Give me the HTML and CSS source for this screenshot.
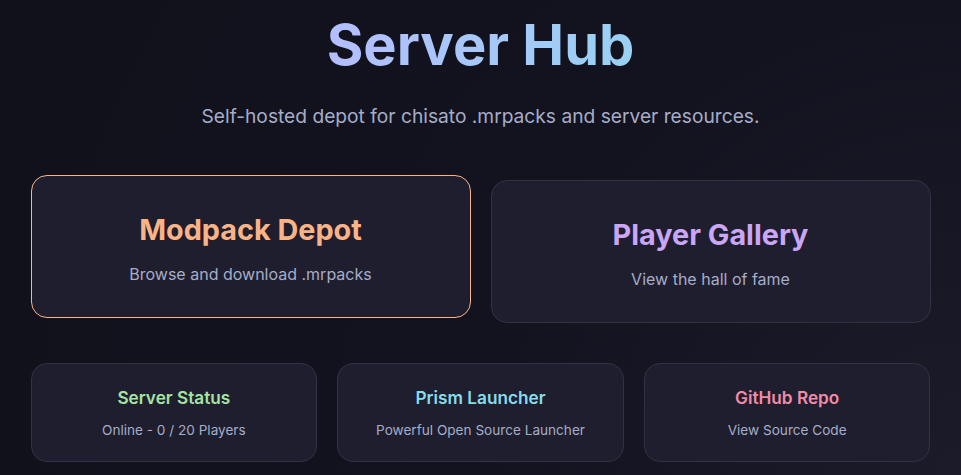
FILE: index.html
```html
<!DOCTYPE html>
<html lang="en">
<head>
<meta charset="utf-8">
<title>Server Hub</title>
<link rel="stylesheet" href="styles.css">
</head>
<body>
<main class="container">
  <header class="hero">
    <h1 class="title">Server Hub</h1>
    <p class="tagline">Self-hosted depot for chisato .mrpacks and server resources.</p>
  </header>
  <section class="main-grid">
    <a class="card card-big card-peach is-hover" href="#">
      <h2 class="card-title">Modpack Depot</h2>
      <p class="card-text">Browse and download .mrpacks</p>
    </a>
    <a class="card card-big card-mauve" href="#">
      <h2 class="card-title">Player Gallery</h2>
      <p class="card-text">View the hall of fame</p>
    </a>
  </section>
  <section class="sub-grid">
    <a class="card card-small card-green" href="#">
      <h3 class="card-title">Server Status</h3>
      <p class="card-text">Online - 0 / 20 Players</p>
    </a>
    <a class="card card-small card-sky" href="#">
      <h3 class="card-title">Prism Launcher</h3>
      <p class="card-text">Powerful Open Source Launcher</p>
    </a>
    <a class="card card-small card-red" href="#">
      <h3 class="card-title">GitHub Repo</h3>
      <p class="card-text">View Source Code</p>
    </a>
  </section>
</main>
</body>
</html>
```
FILE: styles.css
```css
* { box-sizing: border-box; }
html, body { height: 100%; }
body {
  margin: 0;
  font-family: Inter, "Noto Sans", sans-serif;
  color: #cdd6f4;
  background: radial-gradient(circle at 100% 100%, #1b1b29 0%, #131320 45%, #11111b 100%);
  background-color: #11111b;
  overflow: hidden;
}
.container {
  max-width: 900px;
  margin: 0 auto;
  padding-top: 12px;
}
.hero { text-align: center; }
.title {
  margin: 0;
  font-size: 56px;
  font-weight: 700;
  line-height: 1.2;
  background: linear-gradient(90deg, #b4befe 0%, #89dceb 160%);
  -webkit-background-clip: text;
  background-clip: text;
  color: transparent;
  display: inline-block;
}
.tagline {
  margin: 26px 0 0;
  font-size: 19.2px;
  color: #a6adc8;
  line-height: 1.2;
}
.main-grid {
  display: grid;
  grid-template-columns: 1fr 1fr;
  gap: 20px;
  margin-top: 52px;
}
.sub-grid {
  display: grid;
  grid-template-columns: repeat(3, 1fr);
  gap: 20px;
  margin-top: 40px;
}
.card {
  display: block;
  text-decoration: none;
  text-align: center;
  background: #1e1e2e;
  border: 1px solid #313244;
  border-radius: 16px;
}
.card-big { padding: 37px 20px 31px; }
.card-small { padding: 24px 16px 22px; }
.card-big .card-title {
  margin: 0 0 14px;
  font-size: 28.8px;
  font-weight: 700;
  line-height: 1.2;
}
.card-big .card-text {
  margin: 0;
  font-size: 16px;
  line-height: 1.5;
  color: #a6adc8;
}
.card-small .card-title {
  margin: 0 0 14px;
  font-size: 17.2px;
  font-weight: 600;
  line-height: 1.2;
}
.card-small .card-text {
  margin: 0;
  font-size: 13.6px;
  line-height: 1.2;
  color: #a6adc8;
}
.is-hover { transform: translateY(-5px); border-color: #fab387; }
.card-peach .card-title { color: #fab387; }
.card-mauve .card-title { color: #cba6f7; }
.card-green .card-title { color: #a6e3a1; }
.card-sky .card-title { color: #89dceb; }
.card-red .card-title { color: #f38ba8; }
```
